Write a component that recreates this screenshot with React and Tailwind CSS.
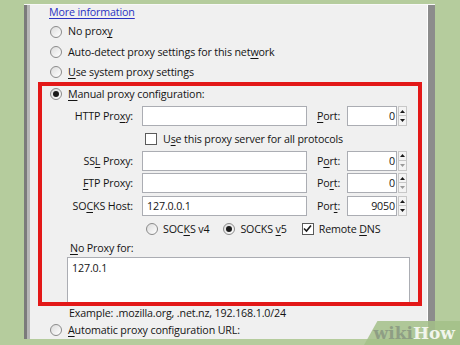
import React from "react";

const U = ({ children }) => <span className="underline underline-offset-[2px] decoration-[1px]">{children}</span>;

function Radio({ checked }) {
  return (
    <span className="w-[12px] h-[12px] rounded-full border border-[#8a8a8a] bg-gradient-to-br from-[#dcdcdc] to-white flex items-center justify-center shrink-0">
      {checked && <span className="w-[6px] h-[6px] rounded-full bg-[#1b1b1b]" />}
    </span>
  );
}

function Check({ checked }) {
  return (
    <span className="w-[12px] h-[12px] border border-[#5a5a5a] bg-white flex items-center justify-center shrink-0">
      {checked && (
        <svg width="9" height="9" viewBox="0 0 9 9">
          <path d="M1 4.5 L3.5 7 L8 1.5" fill="none" stroke="#1a1a1a" strokeWidth="1.6" />
        </svg>
      )}
    </span>
  );
}

function Spin({ downGray }) {
  return (
    <div className="w-[9px] h-[20px] flex flex-col ml-[1px]">
      <div className="h-[10px] border border-[#c8c8c8] bg-[#f4f4f4] flex items-center justify-center">
        <svg width="5" height="3" viewBox="0 0 5 3"><path d="M0 3 L2.5 0 L5 3 Z" fill="#1a1a1a" /></svg>
      </div>
      <div className="h-[10px] border border-t-0 border-[#c8c8c8] bg-[#f4f4f4] flex items-center justify-center">
        <svg width="5" height="3" viewBox="0 0 5 3"><path d="M0 0 L2.5 3 L5 0 Z" fill={downGray ? "#9a9a9a" : "#1a1a1a"} /></svg>
      </div>
    </div>
  );
}

function ProxyRow({ label, value, port, portLabel, h, downGray }) {
  return (
    <div className={`flex items-center ${h}`}>
      <div className="w-[91px] text-right">{label}</div>
      <div className="ml-[9px] w-[165px] h-[20px] border border-[#abadb3] bg-white flex items-center pl-[4px]">{value}</div>
      <div className="ml-[10px] w-[30px]">{portLabel}</div>
      <div className="w-[50px] h-[20px] border border-[#abadb3] bg-white flex items-center justify-end pr-[1px]">{port}</div>
      <Spin downGray={downGray} />
    </div>
  );
}

export default function App() {
  return (
    <div
      className="w-[460px] h-[345px] bg-[#b5cc9d] overflow-hidden relative pt-[4px] pl-[24px] text-[#141414] text-[10.7px] tracking-[-0.15px] leading-none"
      style={{ fontFamily: '"Open Sans", "Noto Sans", sans-serif' }}
    >
      <div className="w-[411px] h-[335px] flex border-t border-[#f8f8f8] bg-[#f0f0f0]">
        <div className="w-[3px] bg-[#7b7b7b]" />
        <div className="w-[3px] bg-[#b7b7b7]" />
        <div className="flex-1 flex flex-col overflow-hidden">
          <div className="h-[15px] flex items-center pl-[19px]">
            <span className="text-[#2b32c2] underline underline-offset-[2px]">More information</span>
          </div>
          <div className="mt-[2px] h-[21px] flex items-center pl-[20px] gap-[6px]">
            <Radio /> <span>No prox<U>y</U></span>
          </div>
          <div className="h-[21px] flex items-center pl-[20px] gap-[6px]">
            <Radio /> <span>Auto-detect proxy settings for this net<U>w</U>ork</span>
          </div>
          <div className="h-[20px] flex items-center pl-[20px] gap-[6px]">
            <Radio /> <span><U>U</U>se system proxy settings</span>
          </div>

          <div className="ml-[8px] w-[384px] h-[225px] border-4 border-[#e31818] flex flex-col">
            <div className="h-[17px] flex items-center pl-[8px] gap-[6px]">
              <Radio checked /> <span><U>M</U>anual proxy configuration:</span>
            </div>
            <div className="mt-[2px]" />
            <ProxyRow h="h-[23px]" label={<span>HTTP Pro<U>x</U>y:</span>} portLabel={<span><U>P</U>ort:</span>} port="0" />
            <div className="h-[22px] flex items-center pl-[103px] gap-[6px]">
              <Check /> <span>U<U>s</U>e this proxy server for all protocols</span>
            </div>
            <ProxyRow h="h-[22px]" label={<span>SS<U>L</U> Proxy:</span>} portLabel={<span>P<U>o</U>rt:</span>} port="0" downGray />
            <ProxyRow h="h-[23px]" label={<span><U>F</U>TP Proxy:</span>} portLabel={<span>Po<U>r</U>t:</span>} port="0" downGray />
            <ProxyRow h="h-[23px]" label={<span>SO<U>C</U>KS Host:</span>} value="127.0.0.1" portLabel={<span>Por<U>t</U>:</span>} port="9050" />
            <div className="h-[22px] flex items-center pl-[104px]">
              <Radio />
              <span className="ml-[5px]">SOC<U>K</U>S v4</span>
              <span className="ml-[14px]"><Radio checked /></span>
              <span className="ml-[5px]">SOCKS <U>v</U>5</span>
              <span className="ml-[15px]"><Check checked /></span>
              <span className="ml-[5px]">Remote <U>D</U>NS</span>
            </div>
            <div className="h-[16px] flex items-center pl-[28px]">
              <span><U>N</U>o Proxy for:</span>
            </div>
            <div className="mt-[1px] ml-[25px] w-[343px] h-[45px] border border-b-0 border-[#abadb3] bg-white pl-[4px] pt-[5px]">
              127.0.1
            </div>
          </div>

          <div className="h-[16px] flex items-center pl-[39px]">
            Example: .mozilla.org, .net.nz, 192.168.1.0/24
          </div>
          <div className="h-[18px] flex items-center pl-[20px] gap-[6px]">
            <Radio /> <span><U>A</U>utomatic proxy configuration URL:</span>
          </div>
        </div>
        <div className="w-[1px] bg-white" />
        <div className="w-[7px] bg-[#8c8c8c]" />
      </div>

      <div className="absolute right-0 bottom-0 w-[96px] h-[24px] bg-[#a3bf88]/85 flex items-center justify-end pr-[5px] [clip-path:polygon(14%_0,100%_0,100%_100%,0_100%)]">
        <span className="text-[17px] font-bold tracking-[0px]" style={{ fontFamily: '"DejaVu Serif", serif' }}>
          <span className="text-[#8e9e84]">wiki</span><span className="text-[#f1f5ec]">How</span>
        </span>
      </div>
    </div>
  );
}
